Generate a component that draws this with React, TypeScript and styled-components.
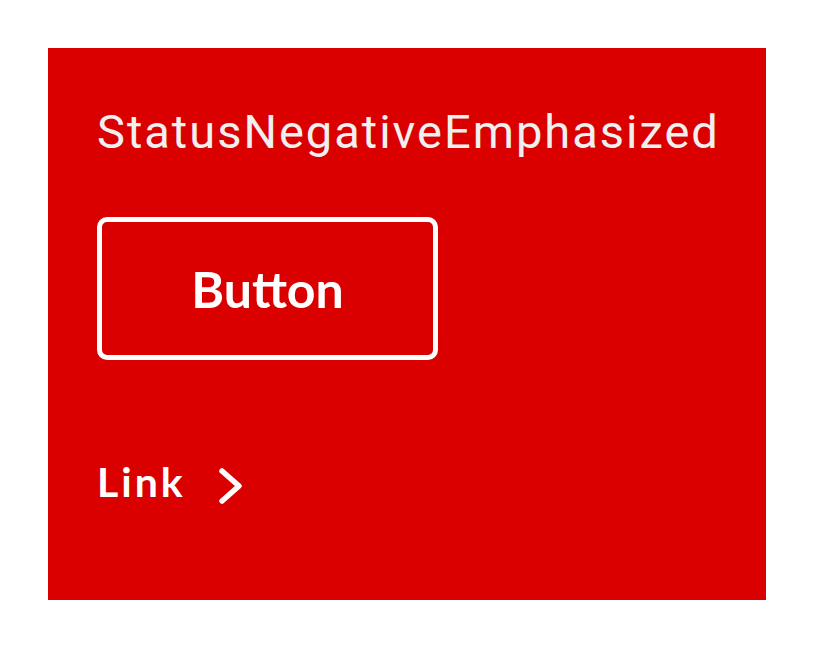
import React from "react";
import styled, { createGlobalStyle } from "styled-components";

const Global = createGlobalStyle`
  html, body { margin: 0; padding: 0; background: #ffffff; }
  #root { padding: 48px; }
`;

const Panel = styled.section`
  box-sizing: border-box;
  width: 718px;
  height: 552px;
  background: #da0000;
  padding: 56px 49px 0 49px;
  display: flex;
  flex-direction: column;
  align-items: flex-start;
`;

const Title = styled.h1`
  margin: 0;
  font-family: Roboto, "Liberation Sans", sans-serif;
  font-weight: 400;
  font-size: 47px;
  line-height: 56px;
  color: #f0f0f0;
  letter-spacing: 2px;
`;

const OutlineButton = styled.button`
  box-sizing: border-box;
  margin-top: 57px;
  width: 341px;
  height: 143px;
  border: 5px solid #ffffff;
  border-radius: 10px;
  background: transparent;
  color: #ffffff;
  font-family: Lato, "Noto Sans", sans-serif;
  font-weight: 700;
  font-size: 50px;
  display: flex;
  align-items: center;
  justify-content: center;
  padding: 0;
`;

const LinkRow = styled.a`
  margin-top: 98px;
  display: flex;
  align-items: center;
  gap: 31px;
  color: #ffffff;
  text-decoration: none;
  font-family: Lato, "Noto Sans", sans-serif;
  font-weight: 700;
  font-size: 41px;
  letter-spacing: 3px;
  line-height: 48px;
`;

const ChevronIcon = styled.svg`
  display: block;
  margin-top: 8px;
`;

const Chevron = () => (
  <ChevronIcon width="28" height="40" viewBox="0 0 28 40" fill="none">
    <path d="M5 5 L22 20 L5 35" stroke="#ffffff" strokeWidth="5.5" strokeLinecap="round" strokeLinejoin="round" />
  </ChevronIcon>
);

export default function App() {
  return (
    <>
      <Global />
      <Panel>
        <Title>StatusNegativeEmphasized</Title>
        <OutlineButton>Button</OutlineButton>
        <LinkRow href="#">
          Link
          <Chevron />
        </LinkRow>
      </Panel>
    </>
  );
}
